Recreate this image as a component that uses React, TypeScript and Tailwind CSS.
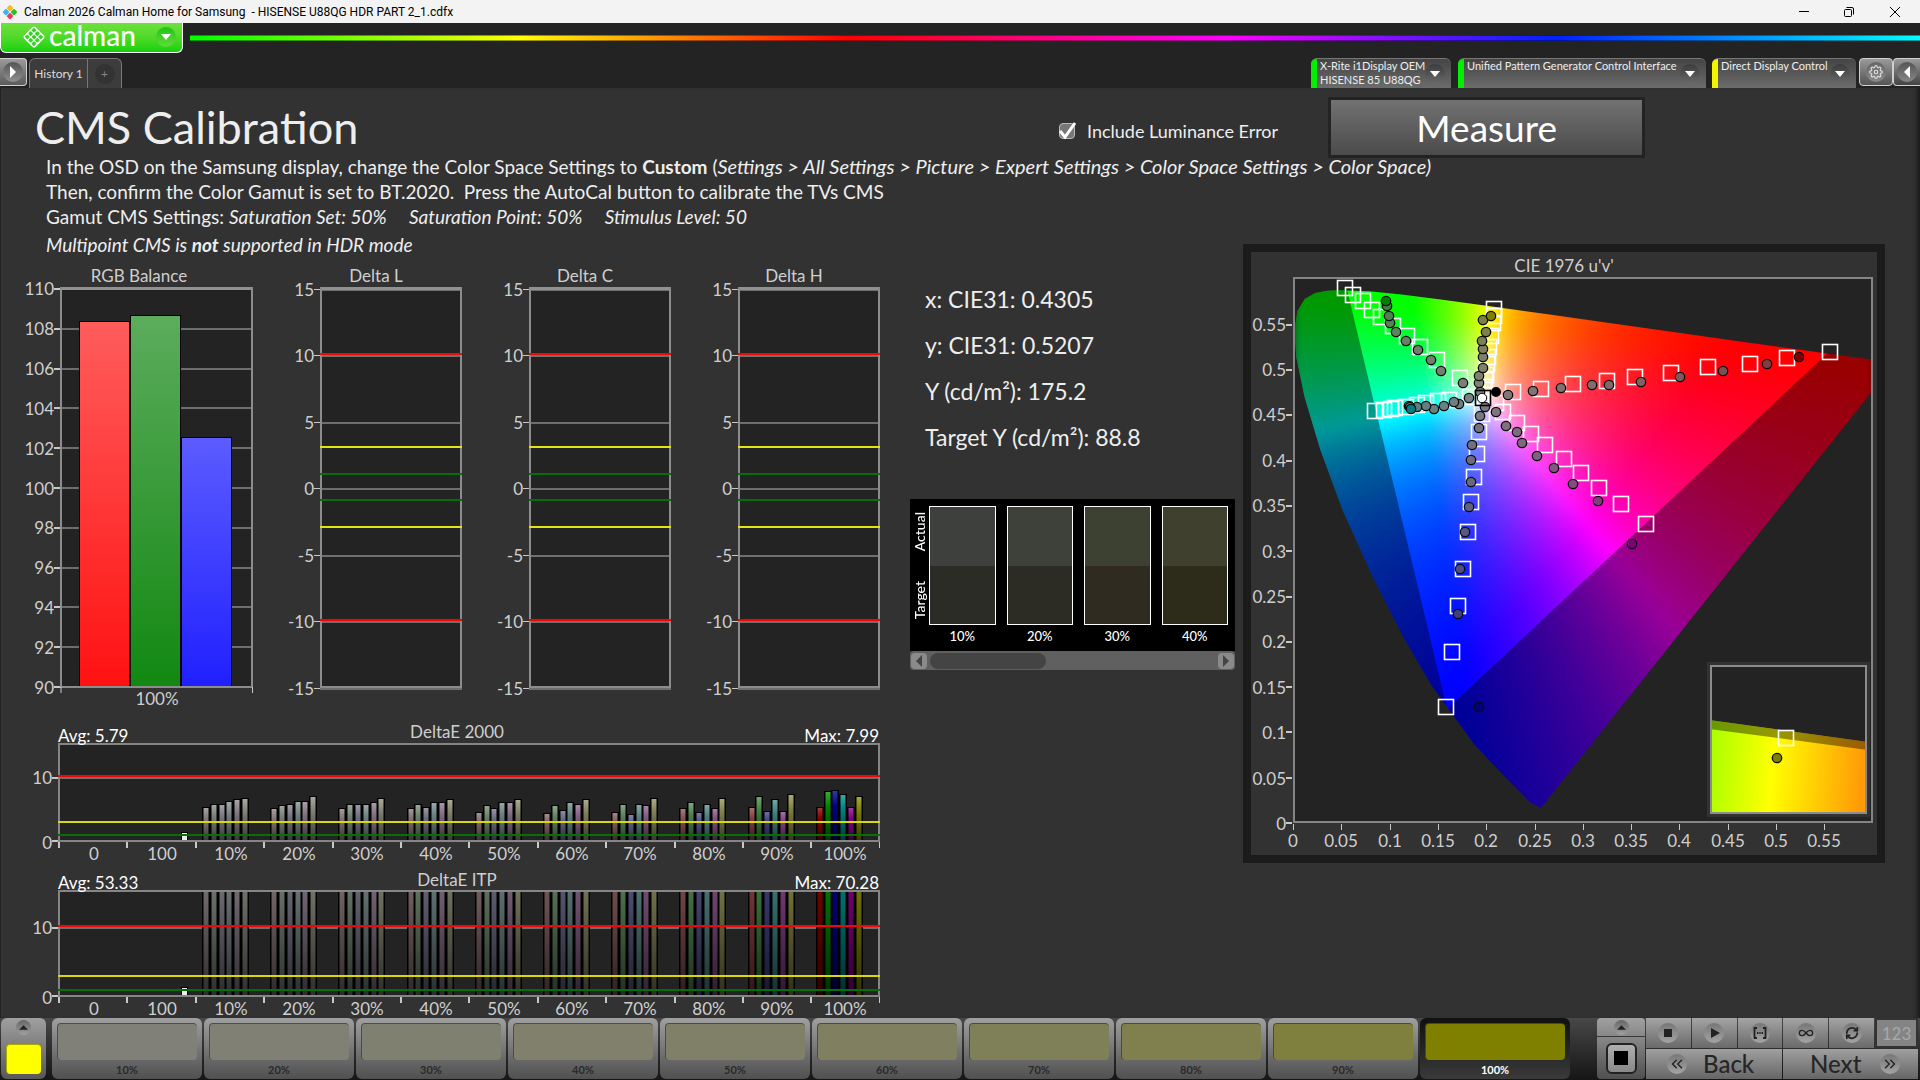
import { ReactNode } from 'react';
import { FiSettings } from 'react-icons/fi';
import { LuChevronsLeft, LuChevronsRight, LuInfinity, LuRefreshCw } from 'react-icons/lu';

type Point = [number, number];
type Hue = 'red' | 'green' | 'blue' | 'cyan' | 'magenta' | 'yellow';

const HUES: Hue[] = ['red', 'green', 'blue', 'cyan', 'magenta', 'yellow'];
const MASKS: Record<Hue, number[]> = {
    red: [1, 0, 0],
    green: [0, 1, 0],
    blue: [0, 0, 1],
    cyan: [0, 1, 1],
    magenta: [1, 0, 1],
    yellow: [1, 1, 0],
};
const STEPS = ['10%', '20%', '30%', '40%', '50%', '60%', '70%', '80%', '90%', '100%'];

// Level of the desaturated channels at each saturation step
const LOW = [120, 116, 112, 108, 104, 96, 88, 78, 62, 0];

function stepColor(hue: Hue, step: number, gain = 1, lift = 0) {
    const c = MASKS[hue].map((m) => Math.round((m ? 128 : LOW[step]) * gain + lift));
    return `rgb(${c.join(',')})`;
}

/* ---------- Charts ---------- */

const RGB_BARS = [
    { x: 79, top: 58, from: '#ff5c5c', to: '#ff1212' },
    { x: 130, top: 52, from: '#5cac5c', to: '#128812' },
    { x: 181, top: 174, from: '#5c5cff', to: '#2020ff' },
];

function RgbBalance() {
    const ticks = [110, 108, 106, 104, 102, 100, 98, 96, 94, 92, 90];
    return (
        <svg viewBox="0 0 266 457" className="block w-full font-[Lato,sans-serif] text-[17px]" role="img" aria-label="RGB Balance">
            <defs>
                {RGB_BARS.map((b) => (
                    <linearGradient key={b.x} id={`rgb${b.x}`} x1="0" y1="0" x2="0" y2="1">
                        <stop offset="0" stopColor={b.from} />
                        <stop offset="1" stopColor={b.to} />
                    </linearGradient>
                ))}
            </defs>
            <text x="139" y="19" textAnchor="middle" className="fill-[#cfcfcf]">RGB Balance</text>
            <rect x="61" y="24" width="192" height="400" className="fill-[#232323]" />
            {ticks.map((t, i) => (
                <g key={t}>
                    <rect x="54" y={Math.round(25 + i * 39.8)} width="7" height="2" className="fill-[#c8c8c8]" />
                    <rect x="61" y={Math.round(25 + i * 39.8)} width="192" height="2" className="fill-[#6e6e6e]" />
                    <text x="54" y={Math.round(32 + i * 39.9)} textAnchor="end" className="fill-[#cfcfcf]">{t}</text>
                </g>
            ))}
            {RGB_BARS.map((b) => (
                <g key={b.x}>
                    <rect x={b.x} y={b.top} width="51" height={424 - b.top} fill="#000" />
                    <rect x={b.x + 1} y={b.top + 1} width="49" height={422 - b.top} fill={`url(#rgb${b.x})`} />
                </g>
            ))}
            <path d="M61 25.5H253" stroke="#919191" strokeWidth="3" />
            <path d="M61 24V424M252 24V424M61 424H253" stroke="#8c8c8c" strokeWidth="2" fill="none" />
            <path d="M61 424V430M252.5 424V430" stroke="#c8c8c8" strokeWidth="1" />
            <text x="157" y="442" textAnchor="middle" className="fill-[#cfcfcf]">100%</text>
        </svg>
    );
}

function DeltaChart({ title }: { title: string }) {
    const y = (v: number) => Math.round(225 - v * 13.3);
    return (
        <svg viewBox="0 0 209 457" className="block w-full font-[Lato,sans-serif] text-[17px]" role="img" aria-label={title}>
            <text x="110" y="19" textAnchor="middle" className="fill-[#cfcfcf]">{title}</text>
            <rect x="54" y="24" width="142" height="400" className="fill-[#232323]" />
            {[15, 10, 5, 0, -5, -10, -15].map((t) => (
                <g key={t}>
                    <rect x="48" y={y(t)} width="6" height="1" className="fill-[#c8c8c8]" />
                    <rect x="54" y={y(t)} width="142" height="2" className="fill-[#6e6e6e]" />
                    <text x="48" y={y(t) + 7} textAnchor="end" className="fill-[#cfcfcf]">{t}</text>
                </g>
            ))}
            <path d="M54 25.5H196" stroke="#919191" strokeWidth="3" />
            <path d="M55 24V424M195 24V424M54 424H196" stroke="#8c8c8c" strokeWidth="2" />
            <rect x="54" y="90" width="142" height="2" fill="#f00a0a" />
            <rect x="54" y="356" width="142" height="2" fill="#ff0000" />
            <rect x="54" y="183" width="142" height="2" fill="#e4e410" />
            <rect x="54" y="263" width="142" height="2" fill="#e4e410" />
            <rect x="54" y="210" width="142" height="2" fill="#067006" />
            <rect x="54" y="236" width="142" height="2" fill="#067006" />
        </svg>
    );
}

// Bar heights of DeltaE 2000, one row per saturation step, in the order of HUES
const DE_HEIGHTS = [
    [34, 37, 37, 40, 42, 43],
    [33, 36, 37, 40, 40, 45],
    [33, 37, 37, 37, 39, 43],
    [33, 37, 34, 39, 39, 42],
    [29, 36, 33, 39, 39, 42],
    [28, 36, 31, 39, 37, 42],
    [29, 37, 27, 37, 36, 43],
    [33, 39, 29, 37, 33, 43],
    [34, 45, 30, 42, 30, 47],
    [34, 50, 51, 47, 34, 45],
];

interface DeltaEProps {
    id: string;
    title: string;
    avg: string;
    max: string;
    height: number;
    titleY: number;
    plotTop: number;
    plotHeight: number;
    ten: number;
    yellow: number;
    green: number;
    clipped?: boolean;
}

function DeltaEChart({ id, title, avg, max, height, titleY, plotTop, plotHeight, ten, yellow, green, clipped }: DeltaEProps) {
    const base = plotTop + plotHeight;
    const labels = ['0', '100', ...STEPS];
    return (
        <svg viewBox={`0 0 893 ${height}`} className="block w-full font-[Lato,sans-serif] text-[17px]" role="img" aria-label={title}>
            <defs>
                {DE_HEIGHTS.map((_, s) =>
                    HUES.map((h) => (
                        <linearGradient key={h + s} id={`${id}-${h}-${s}`} x1="0" y1="0" x2="0" y2="1">
                            <stop offset="0" stopColor={clipped ? stepColor(h, s, 0.88) : stepColor(h, s, 0.9, 55)} />
                            {!clipped && <stop offset=".3" stopColor={stepColor(h, s)} />}
                            <stop offset="1" stopColor={stepColor(h, s, clipped ? 0.36 : 0.42)} />
                        </linearGradient>
                    )),
                )}
            </defs>
            <rect x="58" y={plotTop} width="822" height={plotHeight} className="fill-[#232323]" />
            <rect x="58" y={ten} width="822" height="2" className="fill-[#6e6e6e]" />
            <rect x="52" y={ten} width="6" height="2" className="fill-[#c8c8c8]" />
            <rect x="52" y={base - 2} width="6" height="2" className="fill-[#c8c8c8]" />
            <rect x="181" y={base - 10} width="7" height="10" fill="#000" />
            <rect x="182" y={base - 9} width="5" height="9" fill="#eee" />
            {DE_HEIGHTS.map((row, s) =>
                row.map((h, i) => {
                    const x = Math.round(202 + s * 68.2 + i * 7.8);
                    const top = clipped ? plotTop : base - 1 - h;
                    return (
                        <g key={`${s}-${i}`}>
                            <rect x={x} y={top} width="8" height={base - top} fill="#000" />
                            <rect x={x + 1.5} y={top + 1} width="5" height={base - top - 1} fill={`url(#${id}-${HUES[i]}-${s})`} />
                        </g>
                    );
                }),
            )}
            <rect x="59" y={plotTop + 1} width="820" height={plotHeight - 2} fill="none" stroke="#858585" strokeWidth="2" />
            <rect x="58" y={ten - 2} width="822" height="2" fill="#ee0808" />
            <rect x="58" y={yellow} width="822" height="2" fill="#d8d80c" />
            <rect x="58" y={green} width="822" height="2" fill="#067006" />
            {labels.map((l, i) => (
                <g key={l}>
                    <rect x={Math.round(58 + i * 68.4)} y={base} width="2" height="6" className="fill-[#c8c8c8]" />
                    <text x={Math.round(94 + i * 68.3)} y={base + 18} textAnchor="middle" className="fill-[#cfcfcf]">{l}</text>
                </g>
            ))}
            <rect x="879" y={base} width="1" height="6" className="fill-[#c8c8c8]" />
            <text x="52" y={ten + 7} textAnchor="end" className="fill-[#cfcfcf]">10</text>
            <text x="52" y={base + 7} textAnchor="end" className="fill-[#cfcfcf]">0</text>
            <text x="457" y={titleY} textAnchor="middle" className="fill-[#cfcfcf]">{title}</text>
            <text x="58" y={plotTop - 1} className="fill-white">{avg}</text>
            <text x="879" y={plotTop - 1} textAnchor="end" className="fill-white">{max}</text>
        </svg>
    );
}

/* ---------- CIE diagram ---------- */

// Spectral locus in CIE 1931 xy
const LOCUS: Point[] = [
    [0.1741, 0.005], [0.1689, 0.0069], [0.1644, 0.0109], [0.1566, 0.0177], [0.144, 0.0297], [0.1241, 0.0578],
    [0.1096, 0.0868], [0.0913, 0.1327], [0.0687, 0.2007], [0.0454, 0.295], [0.0235, 0.4127], [0.0082, 0.5384],
    [0.0039, 0.6548], [0.0139, 0.7502], [0.0389, 0.812], [0.0743, 0.8338], [0.1142, 0.8262], [0.1547, 0.8059],
    [0.2296, 0.7543], [0.3016, 0.6923], [0.3731, 0.6245], [0.4441, 0.5547], [0.5125, 0.4866], [0.5752, 0.4242],
    [0.627, 0.3725], [0.6658, 0.334], [0.6915, 0.3083], [0.719, 0.2809], [0.7347, 0.2653],
];

const PLOT_W = 580;
const PLOT_H = 546;
const px = (u: number) => u * 964.5;
const py = (v: number) => PLOT_H - v * 908;

const locusPath = LOCUS.map(([x, y]) => {
    const d = -2 * x + 12 * y + 3;
    return `${px((4 * x) / d).toFixed(1)},${py((9 * y) / d).toFixed(1)}`;
}).join(' ');

function uvColor(u: number, v: number) {
    const x = (9 * u) / (6 * u - 16 * v + 12);
    const y = (4 * v) / (6 * u - 16 * v + 12);
    const X = x / y;
    const Z = (1 - x - y) / y;
    const lin = [
        3.2406 * X - 1.5372 - 0.4986 * Z,
        -0.9689 * X + 1.8758 + 0.0415 * Z,
        0.0557 * X - 0.204 + 1.057 * Z,
    ].map((c) => Math.max(0, c));
    const max = Math.max(...lin);
    return `rgb(${lin.map((c) => Math.round((255 * c) / max)).join(',')})`;
}

const CELL = 6;
const cells: { x: number; y: number; fill: string }[] = [];
for (let y = 0; y < PLOT_H; y += CELL) {
    for (let x = 0; x < PLOT_W; x += CELL) {
        const v = Math.max(0.012, (PLOT_H - y - CELL / 2) / 908);
        cells.push({ x, y, fill: uvColor((x + CELL / 2) / 964.5, v) });
    }
}

const TARGETS: Point[] = [
    [52, 11], [60, 18], [70, 24], [79, 33], [88, 40], [100, 49], [114, 59], [127, 70], [144, 83], [167, 101],
    [201, 32], [201, 39], [200, 46], [198, 59], [196, 70], [195, 80], [194, 87], [193, 98], [192, 103], [191, 110],
    [220, 115], [248, 112], [280, 107], [314, 104], [342, 100], [378, 96], [415, 90], [457, 87], [494, 81], [537, 75],
    [82, 134], [91, 133], [98, 132], [102, 131], [113, 130], [124, 128], [133, 126], [145, 124], [156, 123], [177, 120],
    [189, 137], [186, 155], [184, 177], [181, 200], [178, 225], [175, 255], [170, 292], [165, 329], [159, 375], [153, 430],
    [203, 126], [210, 135], [224, 146], [238, 157], [252, 168], [271, 182], [288, 196], [306, 211], [328, 227], [353, 247],
];

// Measured points, from the lowest saturation to the highest
const MEASURED: Record<Hue, Point[]> = {
    green: [[170, 106], [148, 94], [138, 83], [125, 73], [113, 64], [103, 55], [97, 46], [96, 39], [94, 29], [93, 24]],
    yellow: [[187, 115], [186, 106], [186, 99], [190, 91], [190, 80], [190, 72], [189, 64], [193, 55], [190, 43], [198, 39]],
    red: [[215, 118], [240, 114], [268, 111], [299, 108], [316, 108], [348, 105], [387, 100], [430, 94], [474, 87], [506, 80]],
    cyan: [[176, 121], [166, 127], [161, 125], [151, 129], [141, 132], [133, 129], [124, 130], [116, 129], [117, 130], [118, 132]],
    blue: [[187, 139], [186, 151], [179, 168], [178, 183], [178, 205], [176, 230], [172, 255], [167, 292], [165, 337], [186, 430]],
    magenta: [[192, 130], [203, 135], [213, 149], [224, 155], [229, 166], [244, 179], [261, 191], [280, 207], [305, 224], [339, 267]],
};

function Square({ x, y, color = '#fff' }: { x: number; y: number; color?: string }) {
    return <rect x={x - 7.5} y={y - 7.5} width="15" height="15" fill="none" stroke={color} strokeWidth="1.6" />;
}

function CieDiagram() {
    const xTicks = ['0', '0.05', '0.1', '0.15', '0.2', '0.25', '0.3', '0.35', '0.4', '0.45', '0.5', '0.55'];
    return (
        <svg viewBox="0 0 626 603" className="block w-full font-[Lato,sans-serif] text-[17px]" role="img" aria-label="CIE 1976 u'v'">
            <defs>
                <clipPath id="plot"><rect width={PLOT_W} height={PLOT_H} /></clipPath>
                <clipPath id="locus"><polygon points={locusPath} /></clipPath>
                <clipPath id="inset"><rect x="418" y="389" width="155" height="147" /></clipPath>
                <filter id="smooth" x="0" y="0" width="1" height="1" colorInterpolationFilters="sRGB">
                    <feGaussianBlur stdDeviation="4" />
                </filter>
                <linearGradient id="insetFill" x1="0" x2="1" y1="0" y2="0.05">
                    <stop offset="0" stopColor="#a8ff00" />
                    <stop offset=".42" stopColor="#ffff00" />
                    <stop offset="1" stopColor="#ff9a08" />
                </linearGradient>
            </defs>
            <text x="313" y="20" textAnchor="middle" className="fill-[#cfcfcf]">CIE 1976 u'v'</text>
            <g transform="translate(42 25)">
                <rect width={PLOT_W} height={PLOT_H} className="fill-[#232323]" />
                <g clipPath="url(#plot)">
                    <g clipPath="url(#locus)">
                        <g filter="url(#smooth)">
                            {cells.map((c) => (
                                <rect key={`${c.x}-${c.y}`} x={c.x} y={c.y} width={CELL} height={CELL} fill={c.fill} shapeRendering="crispEdges" />
                            ))}
                        </g>
                        <path d="M0 0H580V546H0ZM53 8L154 432L538 73Z" fillRule="evenodd" fill="#000" opacity=".4" />
                    </g>
                </g>
                <rect x="1" y="1" width="578" height="544" fill="none" stroke="#858585" strokeWidth="2" />
                {xTicks.map((t, i) => (
                    <g key={t}>
                        <rect x={Math.round(i * 48.3)} y="547" width="1" height="6" className="fill-[#c8c8c8]" />
                        <text x={Math.round(i * 48.3)} y="570" textAnchor="middle" className="fill-[#cfcfcf]">{t}</text>
                        <rect x="-7" y={Math.round(545 - i * 45.3)} width="6" height="2" className="fill-[#c8c8c8]" />
                        <text x="-7" y={Math.round(553 - i * 45.4)} textAnchor="end" className="fill-[#cfcfcf]">{t}</text>
                    </g>
                ))}
                {TARGETS.map(([x, y], i) => <Square key={i} x={x} y={y} />)}
                {HUES.map((h) =>
                    MEASURED[h].map(([x, y], i) => (
                        <circle key={h + i} cx={x} cy={y} r="4.7" fill={stepColor(h, i)} stroke="#0c0c0c" strokeWidth="1.3" />
                    )),
                )}
                <Square x={190} y={121} color="#000" />
                <circle cx="203" cy="115" r="5" fill="#000" />
                <circle cx="189" cy="121" r="4.7" fill="#fff" stroke="#000" />
                {/* Detail of the last target */}
                <rect x="414" y="385" width="163" height="155" className="fill-[#323232]" />
                <rect x="417" y="388" width="157" height="149" className="fill-[#232323]" />
                <g clipPath="url(#inset)">
                    <path d="M417 443L574 465V537H417Z" fill="url(#insetFill)" />
                    <path d="M417 443L574 465V473L417 452Z" fill="#000" opacity=".4" />
                </g>
                <rect x="418" y="389" width="155" height="147" fill="none" stroke="#8c8c8c" strokeWidth="2" />
                <Square x={493} y={461} />
                <circle cx="484" cy="481" r="4.7" fill="#808000" stroke="#0c0c0c" strokeWidth="1.3" />
            </g>
        </svg>
    );
}

/* ---------- Header ---------- */

function Caret() {
    return (
        <svg viewBox="0 0 10 6" className="h-[6px] w-[10px]" aria-hidden="true">
            <path d="M0 0H10L5 6Z" fill="#fff" />
        </svg>
    );
}

function TitleBar() {
    return (
        <div className="flex h-[23px] items-center bg-[#f3f3f3] pl-0.5 pr-0.5 font-[Roboto,sans-serif] text-xs text-black">
            <svg viewBox="0 0 16 16" className="mr-1.5 h-4 w-4" aria-hidden="true">
                <rect x="5.6" y="1.6" width="5" height="5" rx="1" transform="rotate(45 8 4)" fill="#ffb81c" />
                <rect x="5.6" y="9.6" width="5" height="5" rx="1" transform="rotate(45 8 12)" fill="#f5325b" />
                <rect x="1.6" y="5.6" width="5" height="5" rx="1" transform="rotate(45 4 8)" fill="#35b6f2" />
                <rect x="9.6" y="5.6" width="5" height="5" rx="1" transform="rotate(45 12 8)" fill="#22c322" />
            </svg>
            <span className="whitespace-pre">Calman 2026 Calman Home for Samsung  - HISENSE U88QG HDR PART 2_1.cdfx</span>
            <div className="ml-auto flex h-full">
                <button aria-label="Minimize" className="flex w-[45px] items-center justify-center">
                    <svg viewBox="0 0 10 10" className="h-[10px] w-[10px]"><path d="M0 4.5H10" stroke="#000" /></svg>
                </button>
                <button aria-label="Restore" className="flex w-[45px] items-center justify-center">
                    <svg viewBox="0 0 10 10" className="h-[10px] w-[10px]" fill="none" stroke="#000">
                        <rect x=".5" y="2.5" width="7" height="7" rx="1" />
                        <path d="M2.5 .5H8Q9.5 .5 9.5 2V7.5" />
                    </svg>
                </button>
                <button aria-label="Close" className="flex w-[47px] items-center justify-center">
                    <svg viewBox="0 0 10 10" className="h-[10px] w-[10px]"><path d="M0 0L10 10M10 0L0 10" stroke="#000" /></svg>
                </button>
            </div>
        </div>
    );
}

function SourceTab({ bar, lines, className }: { bar: string; lines: string[]; className: string }) {
    return (
        <button className={`flex h-[30px] items-stretch overflow-hidden rounded-t-md border-t border-[#777] bg-linear-to-b from-[#454545] to-[#6c6c6c] text-left text-[11px] leading-[14px] text-[#eee] ${className}`}>
            <span className={`w-1.5 shrink-0 ${bar}`} />
            <span className="flex-1 whitespace-nowrap pl-[3px]">
                {lines.map((l) => <span key={l} className="block">{l}</span>)}
            </span>
            <span className="mr-1.5 mt-[5px] flex h-5 w-5 shrink-0 items-center justify-center rounded-full bg-linear-to-b from-[#3c3c3c] to-[#6a6a6a]">
                <Caret />
            </span>
        </button>
    );
}

function Header() {
    return (
        <header className="flex h-[65px] flex-col justify-between bg-[#232323]">
            <div className="flex items-center">
                <button className="flex h-[30px] w-[183px] items-center rounded-b-md border border-t-0 border-white bg-linear-to-b from-[#6fe03c] to-[#08d208] pb-0.5 pl-[21px]">
                    <svg viewBox="0 0 24 24" className="h-6 w-6" aria-hidden="true">
                        <rect x="4" y="4" width="16" height="16" rx="2" transform="rotate(45 12 12)" fill="#fff" />
                        <g transform="rotate(45 12 12)" fill="#35d622">
                            {[5.4, 10.1, 14.8].map((y) => [5.4, 10.1, 14.8].map((x) => (
                                <rect key={`${x}${y}`} x={x} y={y} width="3.7" height="3.7" rx=".8" />
                            )))}
                        </g>
                    </svg>
                    <span className="ml-[3px] pb-1 text-[28px] font-medium leading-[24px] text-white">calman</span>
                    <span className="ml-auto mr-1.5 flex h-5 w-5 items-center justify-center rounded-full bg-linear-to-b from-[#12c412] to-[#5fdc3a]">
                        <Caret />
                    </span>
                </button>
                <div className="ml-[7px] h-1.5 flex-1 border-y border-black/40 bg-[linear-gradient(to_right,#00ff00,#ffff00_19%,#ff0000_38%,#ff00c8_55%,#ff00ff_60%,#0020ff_79%,#00ffff)]" />
            </div>
            <div className="flex items-end">
                <button aria-label="Expand panel" className="mb-0.5 flex h-7 w-[27px] items-center justify-center rounded-r border border-l-0 border-[#d0d0d0] bg-linear-to-b from-[#9a9a9a] to-[#5c5c5c]">
                    <span className="flex h-5 w-5 items-center justify-center rounded-full bg-linear-to-b from-[#555] to-[#909090]">
                        <svg viewBox="0 0 6 12" className="h-3 w-1.5"><path d="M0 0L6 6L0 12Z" fill="#fff" /></svg>
                    </span>
                </button>
                <div className="ml-0.5 flex h-[30px] rounded-t-md border border-b-0 border-[#777] bg-[#3c3c3c] text-xs text-[#ddd]">
                    <button className="w-[58px] border-r border-[#777]">History 1</button>
                    <button aria-label="Add history" className="flex w-[33px] items-center justify-center">
                        <span className="flex h-5 w-5 items-center justify-center rounded-full bg-[#333] text-[#888]">+</span>
                    </button>
                </div>
                <div className="ml-auto flex items-end">
                    <SourceTab className="w-[140px]" bar="bg-[#00f000]" lines={['X-Rite i1Display OEM', 'HISENSE 85 U88QG']} />
                    <SourceTab className="ml-[7px] w-[248px]" bar="bg-[#00f000]" lines={['Unified Pattern Generator Control Interface']} />
                    <SourceTab className="ml-1.5 w-[144px]" bar="bg-[#f4f400]" lines={['Direct Display Control']} />
                    <button aria-label="Settings" className="mb-0.5 ml-[3px] flex h-7 w-[34px] items-center justify-center rounded border border-[#d0d0d0] bg-linear-to-b from-[#9a9a9a] to-[#555]">
                        <span className="flex h-5 w-5 items-center justify-center rounded-full bg-linear-to-b from-[#666] to-[#8a8a8a]">
                            <FiSettings className="text-sm text-[#ddd]" />
                        </span>
                    </button>
                    <button aria-label="Collapse panel" className="mb-0.5 flex h-7 w-[27px] items-center justify-center rounded-l border border-r-0 border-[#d0d0d0] bg-linear-to-b from-[#9a9a9a] to-[#444]">
                        <span className="flex h-5 w-5 items-center justify-center rounded-full bg-linear-to-b from-[#555] to-[#888]">
                            <svg viewBox="0 0 6 12" className="h-3 w-1.5"><path d="M6 0L0 6L6 12Z" fill="#fff" /></svg>
                        </span>
                    </button>
                </div>
            </div>
        </header>
    );
}

/* ---------- Swatches ---------- */

const SWATCHES = [
    { label: '10%', actual: 'bg-[#3e403e]', target: 'bg-[#2c2c26]' },
    { label: '20%', actual: 'bg-[#3e413a]', target: 'bg-[#2c2c24]' },
    { label: '30%', actual: 'bg-[#3d4132]', target: 'bg-[#302b20]' },
    { label: '40%', actual: 'bg-[#40402f]', target: 'bg-[#2d2b1a]' },
];

function SwatchPanel() {
    return (
        <div className="ml-[17px] mr-2 mt-[39px]">
            <div className="flex h-[152px] bg-black pr-[7px] pt-[7px] text-[13px] font-medium text-white">
                <div className="flex h-[119px] w-[19px] flex-col items-center justify-between py-1.5 text-sm">
                    <span className="rotate-180 [writing-mode:vertical-rl]">Actual</span>
                    <span className="rotate-180 [writing-mode:vertical-rl]">Target</span>
                </div>
                <div className="flex flex-1 gap-[11px]">
                    {SWATCHES.map((s) => (
                        <div key={s.label} className="flex-1 text-center">
                            <div className="h-[119px] border border-white">
                                <div className={`h-1/2 ${s.actual}`} />
                                <div className={`h-1/2 ${s.target}`} />
                            </div>
                            <div className="leading-[22px]">{s.label}</div>
                        </div>
                    ))}
                </div>
            </div>
            <div className="flex h-[19px] items-center rounded bg-[#606060] px-px">
                <button aria-label="Scroll left" className="flex h-4 w-4 items-center justify-center rounded bg-[#8a8a8a]">
                    <svg viewBox="0 0 6 12" className="h-3 w-1.5"><path d="M6 0L0 6L6 12Z" fill="#444" /></svg>
                </button>
                <div className="ml-[3px] h-4 w-[116px] rounded-lg bg-[#444]" />
                <button aria-label="Scroll right" className="ml-auto flex h-4 w-4 items-center justify-center rounded bg-[#8a8a8a]">
                    <svg viewBox="0 0 6 12" className="h-3 w-1.5"><path d="M0 0L6 6L0 12Z" fill="#444" /></svg>
                </button>
            </div>
        </div>
    );
}

/* ---------- Bottom bar ---------- */

function ToolButton({ label, children }: { label: string; children: ReactNode }) {
    return (
        <button aria-label={label} className="flex h-[30px] flex-1 items-center justify-center bg-linear-to-b from-[#a4a4a4] to-[#6a6a6a]">
            <span className="flex h-5 w-5 items-center justify-center rounded-full bg-linear-to-b from-[#777] to-[#a4a4a4] text-[#222]">{children}</span>
        </button>
    );
}

function UpArrow() {
    return (
        <span className="flex h-[15px] w-[15px] items-center justify-center rounded-full bg-linear-to-b from-[#666] to-[#a0a0a0]">
            <svg viewBox="0 0 10 5" className="h-[5px] w-[9px]"><path d="M0 5L5 0L10 5Z" fill="#222" /></svg>
        </span>
    );
}

function BottomBar() {
    return (
        <footer className="flex h-[62px] bg-linear-to-b from-[#484848] to-[#161616] pb-px pl-px">
            <button aria-label="Show pattern" className="flex w-[45px] flex-col items-center justify-between rounded-md bg-linear-to-b from-[#a0a0a0] to-[#585858] pb-[5px] pt-0.5">
                <UpArrow />
                <span className="h-[30px] w-[35px] rounded border-l border-t border-[#a8a800] bg-[#ffff00]" />
            </button>
            <div className="ml-1.5 flex flex-1 gap-0.5">
                {STEPS.map((s, i) => {
                    const active = i === 9;
                    return (
                        <button
                            key={s}
                            className={`flex flex-1 flex-col rounded-md px-[5px] pt-[5px] text-[11px] font-bold ${active ? 'bg-linear-to-b from-[#111] to-[#3a3a3a] text-white' : 'bg-linear-to-b from-[#a0a0a0] to-[#505050] text-[#2a2a2a]'}`}
                        >
                            <span className="h-[37px] w-full rounded border-l border-t border-black/40" style={{ backgroundColor: stepColor('yellow', i) }} />
                            <span className="w-full pt-0.5 text-center leading-[16px]">{s}</span>
                        </button>
                    );
                })}
            </div>
            <div className="ml-[27px] flex w-12 flex-col gap-px">
                <button aria-label="More" className="flex h-[18px] items-center justify-center rounded-t bg-linear-to-b from-[#a0a0a0] to-[#888]"><UpArrow /></button>
                <button aria-label="Pattern window" className="flex flex-1 items-center justify-center rounded-b bg-linear-to-b from-[#888] to-[#505050]">
                    <span className="flex h-[31px] w-[31px] items-center justify-center rounded-md border-2 border-[#222] bg-linear-to-b from-[#b0b0b0] to-[#888]">
                        <span className="h-[14px] w-[14px] bg-black" />
                    </span>
                </button>
            </div>
            <div className="ml-px mr-0.5 flex w-[272px] flex-col gap-px">
                <div className="flex gap-px">
                    <ToolButton label="Stop"><svg viewBox="0 0 8 8" className="h-2 w-2"><rect width="8" height="8" fill="#222" /></svg></ToolButton>
                    <ToolButton label="Play"><svg viewBox="0 0 9 10" className="ml-0.5 h-[10px] w-[9px]"><path d="M0 0L9 5L0 10Z" fill="#222" /></svg></ToolButton>
                    <ToolButton label="Range">
                        <svg viewBox="0 0 14 12" className="h-3 w-[14px]" fill="none" stroke="#222" strokeWidth="1.8">
                            <path d="M4 1H1.5V11H4M10 1H12.5V11H10" />
                            <path d="M4 6H10" strokeDasharray="1.4 .9" />
                        </svg>
                    </ToolButton>
                    <ToolButton label="Continuous"><LuInfinity className="text-base" /></ToolButton>
                    <ToolButton label="Refresh"><LuRefreshCw className="stroke-3 text-sm" /></ToolButton>
                    <input aria-label="Count" placeholder="123" className="h-[30px] w-[43px] border-2 border-[#333] bg-[#848484] text-center text-[17px] placeholder:text-[#a8a8a8]" />
                </div>
                <div className="flex flex-1 gap-px text-[24px] font-medium leading-[30px] text-[#262626]">
                    <button className="flex w-[136px] items-center gap-4 bg-linear-to-b from-[#a0a0a0] to-[#666] pl-[21px]">
                        <span className="flex h-5 w-5 items-center justify-center rounded-full bg-linear-to-b from-[#777] to-[#a4a4a4]"><LuChevronsLeft className="text-lg" /></span>
                        Back
                    </button>
                    <button className="flex flex-1 items-center justify-between bg-linear-to-b from-[#a0a0a0] to-[#666] pl-[27px] pr-[18px]">
                        Next
                        <span className="flex h-5 w-5 items-center justify-center rounded-full bg-linear-to-b from-[#777] to-[#a4a4a4]"><LuChevronsRight className="text-lg" /></span>
                    </button>
                </div>
            </div>
        </footer>
    );
}

export default function App() {
    return (
        <div className="flex min-h-screen flex-col bg-[#323232] font-[Lato,sans-serif]">
            <TitleBar />
            <Header />
            <main className="flex-1 text-[#eee] shadow-[inset_-6px_0_5px_-4px_#151515,inset_1px_0_0_#222]">
                {/* Heading and instructions */}
                <section className="h-[148px] pl-[35px]">
                    <div className="flex h-[66px] items-start">
                        <h1 className="w-[1022px] pt-3 text-[45px] leading-[54px]">CMS Calibration</h1>
                        <label className="flex items-center gap-2.5 pt-8 text-[18px] leading-[22px]">
                            <span className="relative h-5 w-5">
                                <input type="checkbox" defaultChecked className="m-0.5 block h-4 w-4 appearance-none rounded-sm border border-[#bbb] bg-[#777]" />
                                <svg viewBox="0 0 20 20" className="pointer-events-none absolute inset-0 h-5 w-5" fill="none" stroke="#fff" strokeWidth="3">
                                    <path d="M3 10L8 16L18 2" />
                                </svg>
                            </span>
                            Include Luminance Error
                        </label>
                        <button className="ml-[50px] mt-[9px] h-[61px] w-[317px] border-3 border-[#232323] bg-linear-to-b from-[#727272] to-[#4b4b4b] text-[37px] leading-[50px] text-white">
                            Measure
                        </button>
                    </div>
                    <p className="whitespace-pre pl-[11px] text-[19px] leading-[25px]">
                        In the OSD on the Samsung display, change the Color Space Settings to <b>Custom</b> (<i className="text-[20px]">Settings &gt; All Settings &gt; Picture &gt; Expert Settings &gt; Color Space Settings &gt; Color Space)</i>
                        {'\n'}Then, confirm the Color Gamut is set to BT.2020.  Press the AutoCal button to calibrate the TVs CMS
                        {'\n'}Gamut CMS Settings: <i>Saturation Set: 50%     Saturation Point: 50%     Stimulus Level: 50</i>
                    </p>
                </section>

                <div className="grid grid-cols-[893fr_350fr_677fr] items-start">
                    {/* Charts */}
                    <section>
                        <p className="h-[27px] pl-[46px] text-[19px] italic leading-[18px]">
                            Multipoint CMS is <b>not</b> supported in HDR mode
                        </p>
                        <div className="grid grid-cols-[266fr_209fr_209fr_209fr]">
                            <RgbBalance />
                            <DeltaChart title="Delta L" />
                            <DeltaChart title="Delta C" />
                            <DeltaChart title="Delta H" />
                        </div>
                        <DeltaEChart id="de" title="DeltaE 2000" avg="Avg: 5.79" max="Max: 7.99" height={148} titleY={18} plotTop={23} plotHeight={99} ten={57} yellow={101} green={114} />
                        <DeltaEChart id="itp" title="DeltaE ITP" avg="Avg: 53.33" max="Max: 70.28" height={150} titleY={18} plotTop={22} plotHeight={107} ten={59} yellow={107} green={121} clipped />
                    </section>

                    {/* Readings */}
                    <section>
                        <div className="pl-8 pt-10 text-[23px] leading-[46px]">
                            <p>x: CIE31: 0.4305</p>
                            <p>y: CIE31: 0.5207</p>
                            <p>Y (cd/m²): 175.2</p>
                            <p>Target Y (cd/m²): 88.8</p>
                        </div>
                        <SwatchPanel />
                    </section>

                    <section className="mr-[35px] mt-2 border-8 border-[#1b1b1b] bg-[#323232]">
                        <CieDiagram />
                    </section>
                </div>
            </main>
            <BottomBar />
        </div>
    );
}
